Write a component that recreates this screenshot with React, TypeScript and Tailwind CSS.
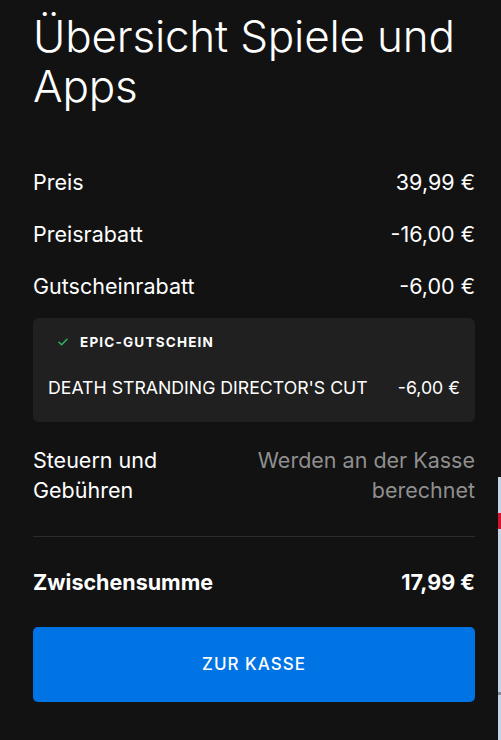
import React from 'react';

const rows = [
  { label: 'Preis', value: '39,99 €' },
  { label: 'Preisrabatt', value: '-16,00 €' },
  { label: 'Gutscheinrabatt', value: '-6,00 €' },
];

const CheckIcon = () => (
  <svg width="10" height="8" viewBox="0 0 10 8" fill="none">
    <path d="M1 4.2L3.6 6.8L9 1.2" stroke="#2fb55f" strokeWidth="1.5" strokeLinecap="round" strokeLinejoin="round" />
  </svg>
);

export default function App() {
  return (
    <div className="w-[501px] h-[740px] bg-[#121212] flex overflow-hidden" style={{ fontFamily: 'Inter, "Noto Sans", sans-serif' }}>
      <div className="w-[498px] pl-[33px] pr-[23px] pt-[11px] text-white flex flex-col">
        <h1 className="text-[44px] leading-[50px] font-light tracking-[-0.2px]">Übersicht Spiele und Apps</h1>

        <div className="mt-[57px] flex flex-col gap-6">
          {rows.map(r => (
            <div key={r.label} className="flex justify-between text-[21.5px] leading-[28px]">
              <span>{r.label}</span>
              <span>{r.value}</span>
            </div>
          ))}
        </div>

        <div className="mt-[18px] bg-[#202020] rounded-md pl-[15px] pr-[15px] pt-[14px] pb-[22px]">
          <div className="flex items-center gap-[12px] pl-[10px] text-[13.5px] leading-[20px] font-bold tracking-[1.2px]">
            <CheckIcon />
            <span>EPIC-GUTSCHEIN</span>
          </div>
          <div className="mt-6 flex justify-between text-[17.7px] leading-[24px]">
            <span>DEATH STRANDING DIRECTOR'S CUT</span>
            <span>-6,00 €</span>
          </div>
        </div>

        <div className="mt-[23px] flex justify-between text-[21.5px] leading-[30px]">
          <span className="w-[150px]">Steuern und Gebühren</span>
          <span className="text-right text-[#8f8f8f] w-[230px]">Werden an der Kasse berechnet</span>
        </div>

        <div className="mt-[31px] h-px bg-[#2c2c2c]" />

        <div className="mt-[31px] flex justify-between text-[21.5px] leading-[28px] font-bold">
          <span>Zwischensumme</span>
          <span>17,99 €</span>
        </div>

        <button className="mt-[31px] h-[75px] w-full rounded-[5px] bg-[#0074e4] text-white text-[17px] font-medium tracking-[1px]">
          ZUR KASSE
        </button>
      </div>
      <div className="w-[3px] flex flex-col">
        <div className="h-[477px] bg-[#121212]" />
        <div className="h-[36px] bg-[#c3d5e8]" />
        <div className="h-[16px] bg-[#d4142a]" />
        <div className="h-[163px] bg-[#c3d5e8]" />
        <div className="h-[3px] bg-[#7d8a98]" />
        <div className="flex-1 bg-[#c3d5e8]" />
      </div>
    </div>
  );
}
